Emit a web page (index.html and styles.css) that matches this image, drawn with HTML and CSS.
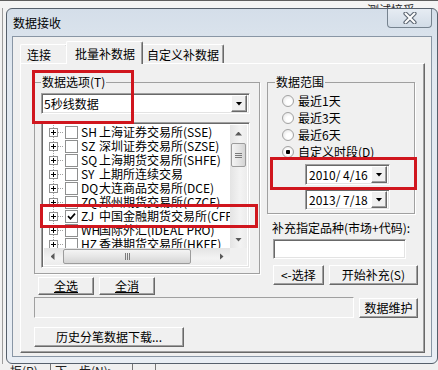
FILE: index.html
```html
<!DOCTYPE html>
<html lang="zh-CN">
<head>
  <meta charset="UTF-8">
  <title>数据接收</title>
  <link rel="stylesheet" href="styles.css">
</head>
<body>

<div class="desk-top"><span class="desk-caption">测试接受</span></div>

<div class="dialog">
  <div class="titlebar">
    <span class="title">数据接收</span>
    <span class="close-btn">
      <svg width="14" height="12" viewBox="0 0 14 12">
        <path d="M2.5 1.5 L11.5 10.5 M11.5 1.5 L2.5 10.5" stroke="#5d6672" stroke-width="4.2" stroke-linecap="round"/>
        <path d="M2.5 1.5 L11.5 10.5 M11.5 1.5 L2.5 10.5" stroke="#fff" stroke-width="2" stroke-linecap="round"/>
      </svg>
    </span>
  </div>

  <div class="client">
    <div class="tabs">
      <span class="tab tab-conn">连接</span>
      <span class="tab tab-batch active">批量补数据</span>
      <span class="tab tab-custom">自定义补数据</span>
    </div>

    <div class="page">
      <div class="cols">
        <div class="col-left">
          <fieldset class="group group-opts">
            <legend>数据选项(T)</legend>
            <div class="combo">
              <span class="combo-text">5秒线数据</span>
              <span class="drop-btn"></span>
            </div>
            <div class="tree">
              <div class="tree-rows">
                <div class="tree-row"><span class="pm"></span><span class="link"></span><span class="chk"></span><span class="code">SH</span><span>上海证券交易所(SSE)</span></div>
                <div class="tree-row"><span class="pm"></span><span class="link"></span><span class="chk"></span><span class="code">SZ</span><span>深圳证券交易所(SZSE)</span></div>
                <div class="tree-row"><span class="pm"></span><span class="link"></span><span class="chk"></span><span class="code">SQ</span><span>上海期货交易所(SHFE)</span></div>
                <div class="tree-row"><span class="pm"></span><span class="link"></span><span class="chk"></span><span class="code">SY</span><span>上期所连续交易</span></div>
                <div class="tree-row"><span class="pm"></span><span class="link"></span><span class="chk"></span><span class="code">DQ</span><span>大连商品交易所(DCE)</span></div>
                <div class="tree-row"><span class="pm"></span><span class="link"></span><span class="chk"></span><span class="code">ZQ</span><span>郑州期货交易所(CZCE)</span></div>
                <div class="tree-row"><span class="pm"></span><span class="link"></span><span class="chk checked"><svg width="9" height="9" viewBox="0 0 9 9"><path d="M1 4.2 L3.5 6.8 L8 1.6" fill="none" stroke="#000" stroke-width="1.7"/></svg></span><span class="code">ZJ</span><span>中国金融期货交易所(CFFEX)</span></div>
                <div class="tree-row"><span class="pm"></span><span class="link"></span><span class="chk"></span><span class="code">WH</span><span>国际外汇(IDEAL PRO)</span></div>
                <div class="tree-row"><span class="pm"></span><span class="link"></span><span class="chk"></span><span class="code">HZ</span><span>香港期货交易所(HKFE)</span></div>
                <div class="tree-row"><span class="pm"></span><span class="link"></span><span class="chk"></span><span class="code">QH</span><span>国际期货</span></div>
              </div>
              <div class="vscroll">
                <span class="sb-arrow"><span class="tri tri-up"></span></span>
                <span class="sb-track"><span class="thumb thumb-v"></span></span>
                <span class="sb-arrow"><span class="tri tri-down"></span></span>
              </div>
              <div class="hscroll">
                <span class="sb-arrow"><span class="tri tri-left"></span></span>
                <span class="sb-track"><span class="thumb thumb-h"></span></span>
                <span class="sb-arrow"><span class="tri tri-right"></span></span>
              </div>
              <div class="corner"></div>
            </div>
          </fieldset>
          <div class="btn-row btn-row-left">
            <button class="btn btn-sel">全选</button>
            <button class="btn btn-sel">全消</button>
          </div>
        </div>

        <div class="col-right">
          <fieldset class="group group-range">
            <legend>数据范围</legend>
            <div class="radio-row"><span class="radio"></span>最近1天</div>
            <div class="radio-row"><span class="radio"></span>最近3天</div>
            <div class="radio-row"><span class="radio"></span>最近6天</div>
            <div class="radio-row"><span class="radio on"></span>自定义时段(D)</div>
            <div class="date"><span class="date-text">2010/ 4/16</span><span class="drop-btn"></span></div>
            <div class="date"><span class="date-text">2013/ 7/18</span><span class="drop-btn"></span></div>
          </fieldset>
          <div class="spec-label">补充指定品种(市场+代码):</div>
          <div class="spec-input"></div>
          <div class="btn-row btn-row-right">
            <button class="btn btn-pick">&lt;-选择</button>
            <button class="btn btn-start">开始补充(S)</button>
          </div>
        </div>
      </div>

      <div class="status-row">
        <div class="status"></div>
        <button class="btn btn-maint">数据维护</button>
      </div>
      <button class="btn btn-hist">历史分笔数据下载...</button>

      <div class="mark mark-opts"></div>
      <div class="mark mark-zj"></div>
      <div class="mark mark-date"></div>
    </div>
  </div>
</div>

<div class="desk-bottom">
  <span class="desk-btn desk-btn-a">拒(R)</span>
  <span class="desk-btn desk-btn-b">下一步(N)&gt;</span>
  <span class="desk-btn desk-btn-c"></span>
</div>

</body>
</html>
```

FILE: styles.css
```css
* {
  box-sizing: border-box;
}

body {
  margin: 0;
  width: 438px;
  height: 370px;
  overflow: hidden;
  background: linear-gradient(to right, #f2f2f2 2px, #9c9c9c 2px 3px, #f2f2f2 3px);
  font-family: "Noto Sans CJK SC", sans-serif;
  font-size: 12px;
  color: #000;
}

button {
  font: inherit;
  color: inherit;
  padding: 0;
  margin: 0;
}

/* window behind the dialog */
.desk-top {
  height: 8px;
  overflow: hidden;
  border-top: 1px solid #5e5e5e;
  background: #f4f4f4;
  padding-left: 367px;
  line-height: 14px;
}

.desk-caption {
  display: block;
  padding-top: 2px;
  color: #222;
}

.desk-bottom {
  display: flex;
  height: 6px;
  overflow: hidden;
  line-height: 14px;
  background: #f0f0f0;
}

.desk-btn {
  color: #222;
}

.desk-btn-a {
  width: 50px;
  padding-left: 10px;
}

.desk-btn-b {
  width: 82px;
  border-left: 1px solid #777;
  padding-left: 4px;
}

.desk-btn-c {
  width: 24px;
  border-left: 1px solid #777;
  border-right: 1px solid #777;
}

/* dialog frame */
.dialog {
  margin-left: 6px;
  width: 432px;
  height: 356px;
  border: 1px solid #56606c;
  border-radius: 6px;
  padding: 0 5px 6px;
  background: linear-gradient(#d4dee9, #e1e8f0 60px, #e9eef4);
}

.titlebar {
  display: flex;
  height: 27px;
}

.title {
  padding: 7px 0 0 1px;
  line-height: 14px;
}

.close-btn {
  display: flex;
  align-items: center;
  justify-content: center;
  margin-left: auto;
  width: 45px;
  height: 19px;
  border: 1px solid #76838f;
  border-top: none;
  border-radius: 0 0 4px 4px;
  background: linear-gradient(#e6ecf3, #d2dce7);
}

.client {
  height: 321px;
  border: 1px solid #8996a5;
  background: #f0f0f0;
  padding-left: 7px;
}

/* tabs */
.tabs {
  display: flex;
  align-items: flex-end;
  height: 26px;
}

.tab {
  height: 19px;
  border: 1px solid;
  border-color: #fff #696969 transparent #fff;
  border-bottom: none;
  border-radius: 2px 2px 0 0;
  box-shadow: inset -1px 0 #a0a0a0;
  background: #f0f0f0;
  line-height: 14px;
  padding-top: 3px;
}

.tab-conn {
  width: 48px;
  padding-left: 6px;
}

.tab-batch {
  width: 77px;
  padding-left: 8px;
}

.tab-custom {
  width: 83px;
  margin-left: -2px;
  padding-left: 5px;
}

.tab.active {
  position: relative;
  z-index: 1;
  height: 23px;
  margin: 0 0 -1px -2px;
  padding-top: 5px;
}

.page {
  position: relative;
  width: 405px;
  height: 290px;
  border: 1px solid;
  border-color: #fff #696969 #696969 #fff;
  box-shadow: inset -1px -1px #a0a0a0;
  padding: 11px 0 0 13px;
}

.cols {
  display: grid;
  grid-template-columns: 226px 151px;
  column-gap: 7px;
  align-items: start;
}

/* group boxes */
.group {
  margin: 0;
  min-width: 0;
  border: 1px solid #a0a0a0;
  box-shadow: 1px 1px 0 #fff;
}

.group legend {
  line-height: 14px;
  padding: 0 1px;
  background: #f0f0f0;
}

.group-opts {
  padding: 4px 9px 5px 6px;
}

.group-range {
  width: 148px;
  padding: 3px 0 3px 14px;
}

.group-range legend {
  margin-left: -7px;
}

/* sunken fields */
.combo,
.date,
.tree,
.spec-input {
  border: 1px solid;
  border-color: #a0a0a0 #fff #fff #a0a0a0;
  box-shadow: inset 1px 1px #696969, inset -1px -1px #e3e3e3;
  background: #fff;
}

.combo {
  display: flex;
  align-items: center;
  height: 21px;
  padding: 2px;
}

.combo-text {
  flex: 1;
  line-height: 14px;
}

.drop-btn {
  display: flex;
  align-items: center;
  justify-content: center;
  width: 16px;
  height: 17px;
  border: 1px solid;
  border-color: #fff #696969 #696969 #fff;
  box-shadow: inset -1px -1px #a0a0a0;
  background: #f0f0f0;
}

.drop-btn::after {
  content: "";
  width: 7px;
  height: 4px;
  background: #000;
  clip-path: polygon(0 0, 100% 0, 50% 100%);
}

/* tree list */
.tree {
  display: grid;
  grid-template-columns: 1fr 17px;
  grid-template-rows: 1fr 17px;
  height: 146px;
  margin-top: 8px;
  padding: 2px;
}

.tree-rows {
  overflow: hidden;
}

.tree-row {
  display: flex;
  align-items: center;
  height: 14px;
  white-space: nowrap;
  line-height: 14px;
  background: repeating-linear-gradient(#a0a0a0 0 1px, transparent 1px 2px) no-repeat 9px 0 / 1px 100%;
}

.pm {
  flex: none;
  width: 9px;
  height: 9px;
  margin-left: 5px;
  border: 1px solid #919191;
  background:
    linear-gradient(#000, #000) center / 5px 1px no-repeat,
    linear-gradient(#000, #000) center / 1px 5px no-repeat,
    #fff;
}

.link {
  flex: none;
  width: 6px;
  height: 1px;
  margin-right: 1px;
  background: repeating-linear-gradient(to right, #a0a0a0 0 1px, transparent 1px 2px);
}

.chk {
  display: flex;
  align-items: center;
  justify-content: center;
  flex: none;
  width: 13px;
  height: 13px;
  margin-right: 3px;
  border: 1px solid #8e8f8f;
  background: #fff;
}

.code {
  flex: none;
  width: 18px;
}

/* scrollbars */
.vscroll,
.hscroll {
  display: flex;
  background: linear-gradient(to right, #e4e4e4, #f3f3f3 60%, #ececec);
}

.vscroll {
  flex-direction: column;
}

.hscroll {
  background: linear-gradient(#e4e4e4, #f3f3f3 60%, #ececec);
}

.sb-arrow {
  display: flex;
  align-items: center;
  justify-content: center;
  flex: none;
  width: 17px;
  height: 17px;
}

.sb-track {
  flex: 1;
  display: flex;
}

.vscroll .sb-track {
  flex-direction: column;
}

.tri {
  width: 7px;
  height: 4px;
  background: #5a5a5a;
}

.tri-up {
  clip-path: polygon(50% 0, 100% 100%, 0 100%);
}

.tri-down {
  clip-path: polygon(0 0, 100% 0, 50% 100%);
}

.tri-left,
.tri-right {
  width: 4px;
  height: 7px;
}

.tri-left {
  clip-path: polygon(100% 0, 100% 100%, 0 50%);
}

.tri-right {
  clip-path: polygon(0 0, 100% 50%, 0 100%);
}

.thumb {
  border: 1px solid #9c9c9c;
  border-radius: 2px;
}

.thumb-v {
  height: 24px;
  margin: 1px 1px 0;
  background:
    repeating-linear-gradient(#7a7a7a 0 1px, transparent 1px 2px) center / 7px 5px no-repeat,
    linear-gradient(to right, #f4f4f4, #e6e6e6 50%, #d4d4d4);
}

.thumb-h {
  width: 128px;
  margin: 1px 0 1px 2px;
  background:
    repeating-linear-gradient(to right, #7a7a7a 0 1px, transparent 1px 2px) center / 5px 7px no-repeat,
    linear-gradient(#f4f4f4, #e6e6e6 50%, #d4d4d4);
}

.corner {
  background: #f0f0f0;
}

/* radios and dates */
.radio-row {
  display: flex;
  align-items: center;
  height: 17px;
  line-height: 14px;
}

.radio {
  width: 12px;
  height: 12px;
  margin-right: 4px;
  border: 1px solid #a2a2a2;
  border-radius: 50%;
  background: radial-gradient(circle at 60% 60%, #fff 30%, #dedede);
}

.radio.on {
  background: radial-gradient(circle, #000 2px, #fff 2.5px, #fff 40%, #dedede);
}

.date {
  display: flex;
  align-items: center;
  width: 85px;
  height: 21px;
  margin: 4px 0 0 23px;
  padding: 2px;
}

.date-text {
  flex: 1;
  padding-left: 1px;
  line-height: 14px;
  white-space: pre;
}

.spec-label {
  margin: 7px 0 0 5px;
  line-height: 14px;
}

.spec-input {
  width: 133px;
  height: 20px;
  margin: 4px 0 0 6px;
}

/* buttons */
.btn {
  height: 20px;
  border: 1px solid;
  border-color: #fff #696969 #696969 #fff;
  box-shadow: inset -1px -1px #a0a0a0;
  background: #f0f0f0;
  line-height: 14px;
  text-align: center;
}

.btn-row {
  display: flex;
  gap: 5px;
}

.btn-row-left {
  margin: 3px 0 0 4px;
}

.btn-sel {
  width: 56px;
  height: 18px;
  text-decoration: underline;
  text-underline-offset: 1px;
}

.btn-row-right {
  margin: 6px 0 0 6px;
}

.btn-pick {
  width: 51px;
}

.btn-start {
  width: 90px;
}

.status-row {
  display: flex;
  gap: 5px;
  margin-top: 2px;
}

.status {
  width: 320px;
  height: 21px;
  border: 1px solid;
  border-color: #a0a0a0 #fff #fff #a0a0a0;
}

.btn-maint {
  width: 59px;
  margin-top: 1px;
}

.btn-hist {
  display: block;
  width: 150px;
  margin-top: 9px;
}

/* red annotation boxes */
.mark {
  position: absolute;
  border: 3px solid #d0161e;
}

.mark-opts {
  left: 11px;
  top: 6px;
  width: 102px;
  height: 54px;
}

.mark-zj {
  left: 19px;
  top: 140px;
  width: 218px;
  height: 24px;
}

.mark-date {
  left: 249px;
  top: 93px;
  width: 147px;
  height: 33px;
}
```
